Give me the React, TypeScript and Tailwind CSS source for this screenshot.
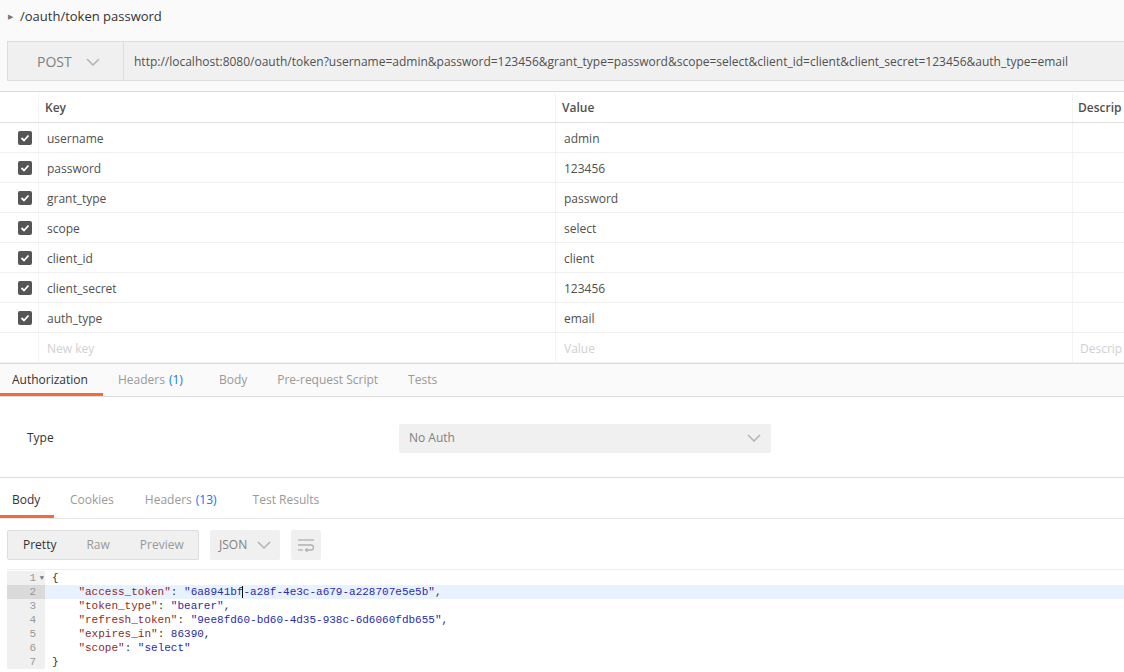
import React from 'react'

const params = [
  ['username', 'admin'],
  ['password', '123456'],
  ['grant_type', 'password'],
  ['scope', 'select'],
  ['client_id', 'client'],
  ['client_secret', '123456'],
  ['auth_type', 'email'],
]

function Chevron({ className }: { className?: string }) {
  return (
    <svg width="14" height="8" viewBox="0 0 14 8" className={className} fill="none">
      <path d="M1 1l6 6 6-6" stroke="#b5b5b5" strokeWidth="1.6" />
    </svg>
  )
}

function CheckBox() {
  return (
    <div className="size-[14px] rounded-[2px] bg-[#555] flex items-center justify-center">
      <svg width="10" height="8" viewBox="0 0 10 8" fill="none">
        <path d="M1.5 4l2.5 2.5L8.5 1.5" stroke="#fff" strokeWidth="1.8" />
      </svg>
    </div>
  )
}

function Row({ k, v, placeholder }: { k: string; v: string; placeholder?: boolean }) {
  const txt = placeholder ? 'text-[#d0d0d0]' : 'text-[#505050]'
  return (
    <div className="flex h-[30px] border-b border-[#f0f0f0]">
      <div className="w-[39px] flex items-center justify-end pr-[6px] border-r border-[#f3f3f3]">
        {!placeholder && <CheckBox />}
      </div>
      <div className={`w-[517px] flex items-center pl-[8px] pt-[2px] border-r border-[#f3f3f3] ${txt}`}>{k}</div>
      <div className={`w-[517px] flex items-center pl-[8px] pt-[2px] border-r border-[#f3f3f3] ${txt}`}>{v}</div>
      <div className="flex-1 flex items-center pl-[7px] pt-[2px] text-[#d0d0d0] overflow-hidden whitespace-nowrap">
        {placeholder ? 'Descrip' : ''}
      </div>
    </div>
  )
}

const K = ({ children }: { children: React.ReactNode }) => <span className="text-[#8a2b2b]">{children}</span>
const S = ({ children }: { children: React.ReactNode }) => <span className="text-[#2a2ab0]">{children}</span>

export default function App() {
  const lines: React.ReactNode[] = [
    <>{'{'}</>,
    <>    <K>"access_token"</K>: <S>"6a8941bf<span className="border-l border-black -ml-px" />-a28f-4e3c-a679-a228707e5e5b"</S>,</>,
    <>    <K>"token_type"</K>: <S>"bearer"</S>,</>,
    <>    <K>"refresh_token"</K>: <S>"9ee8fd60-bd60-4d35-938c-6d6060fdb655"</S>,</>,
    <>    <K>"expires_in"</K>: <span className="text-[#2a2a9a]">86390</span>,</>,
    <>    <K>"scope"</K>: <S>"select"</S></>,
    <>{'}'}</>,
  ]

  return (
    <div className="w-[1124px] h-[672px] overflow-hidden bg-white text-[12px] text-[#505050]" style={{ fontFamily: '"Open Sans", "Noto Sans", sans-serif' }}>
      {/* request header */}
      <div className="bg-[#fafafa] pl-[7px] pb-[10px]">
        <div className="h-[33px] flex items-center gap-[7px] pt-[1px]">
          <span className="text-[7px] text-[#777] ml-[1px]">▶</span>
          <span className="text-[13px] text-[#333]">/oauth/token password</span>
        </div>
        <div className="mt-[8px] h-[40px] flex bg-[#f0f0f0] border border-[#dddddd] border-r-0">
          <div className="w-[116px] flex items-center pl-[29px] gap-[14px] border-r border-[#dddddd] pt-[1px]">
            <span className="text-[14px] text-[#808080]">POST</span>
            <Chevron />
          </div>
          <div className="flex-1 flex items-center pl-[10px] pt-[1px] text-[#505050] whitespace-nowrap overflow-hidden">
            http://localhost:8080/oauth/token?username=admin&amp;password=123456&amp;grant_type=password&amp;scope=select&amp;client_id=client&amp;client_secret=123456&amp;auth_type=email
          </div>
        </div>
      </div>

      {/* params table */}
      <div className="border-t border-[#dcdcdc]">
        <div className="flex h-[31px] border-b border-[#e0e0e0] font-semibold text-[#505050] pt-[1px]">
          <div className="w-[39px] border-r border-[#f3f3f3]" />
          <div className="w-[517px] flex items-center pl-[6px] border-r border-[#f3f3f3]">Key</div>
          <div className="w-[517px] flex items-center pl-[6px] border-r border-[#f3f3f3]">Value</div>
          <div className="flex-1 flex items-center pl-[5px] whitespace-nowrap overflow-hidden">Descrip</div>
        </div>
        {params.map(([k, v]) => (
          <Row key={k} k={k} v={v} />
        ))}
        <Row k="New key" v="Value" placeholder />
      </div>

      {/* request tabs */}
      <div className="h-[34px] flex bg-[#fafafa] border-t border-[#dcdcdc] border-b border-b-[#dcdcdc]">
        <div className="w-[103px] flex items-center pl-[12px] text-[#333] border-b-[3px] border-[#f26b3a] pt-[3px]">Authorization</div>
        <div className="flex items-center pl-[15px] pr-[18px] text-[#999]">
          Headers <span className="text-[#097bed] ml-[4px]">(1)</span>
        </div>
        <div className="flex items-center pl-[18px] pr-[17px] text-[#999]">Body</div>
        <div className="flex items-center px-[13px] text-[#999]">Pre-request Script</div>
        <div className="flex items-center px-[17px] text-[#999]">Tests</div>
      </div>

      {/* auth body */}
      <div className="h-[80px] flex items-center pt-[2px]">
        <div className="w-[399px] pl-[27px] text-[#333]">Type</div>
        <div className="w-[372px] h-[29px] bg-[#f0f0f0] rounded-[2px] flex items-center justify-between pl-[10px] pr-[10px] text-[#808080]">
          <span>No Auth</span>
          <Chevron />
        </div>
      </div>

      {/* response tabs */}
      <div className="h-[42px] flex border-t border-[#dcdcdc] border-b border-b-[#e6e6e6]">
        <div className="w-[54px] flex items-center pl-[12px] text-[#333] border-b-[3px] border-[#f26b3a] pt-[6px]">Body</div>
        <div className="flex items-center pl-[16px] pr-[16px] text-[#999] pt-[3px]">Cookies</div>
        <div className="flex items-center px-[15px] text-[#999] pt-[3px]">
          Headers <span className="text-[#097bed] ml-[4px]">(13)</span>
        </div>
        <div className="flex items-center pl-[21px] pr-[20px] text-[#999] pt-[3px]">Test Results</div>
      </div>

      {/* toolbar */}
      <div className="h-[50px] flex items-center pl-[7px] gap-[11px] pt-[1px]">
        <div className="w-[192px] h-[30px] flex items-center bg-[#f0f0f0] border border-[#dddddd] rounded-[2px] text-[#999]">
          <span className="pl-[15px] text-[#333]">Pretty</span>
          <span className="pl-[30px]">Raw</span>
          <span className="pl-[30px]">Preview</span>
        </div>
        <div className="w-[70px] h-[30px] flex items-center justify-between px-[9px] bg-[#f0f0f0] rounded-[2px] text-[#808080]">
          <span>JSON</span>
          <Chevron />
        </div>
        <div className="w-[30px] h-[30px] flex items-center justify-center bg-[#f0f0f0] rounded-[2px]">
          <svg width="18" height="14" viewBox="0 0 18 14" fill="none" stroke="#b0b0b0" strokeWidth="1.3">
            <path d="M1 2h16" />
            <path d="M1 7h13a2.5 2.5 0 010 5h-5" />
            <path d="M10.5 10.2L8.5 12l2 1.8" />
            <path d="M1 12h5" />
          </svg>
        </div>
      </div>

      {/* editor */}
      <div className="ml-[7px] border-t border-[#eeeeee] pt-[1px] text-[11px] leading-[14px]" style={{ fontFamily: '"Liberation Mono", "DejaVu Sans Mono", monospace' }}>
        {lines.map((ln, i) => (
          <div key={i} className={`flex h-[14px] ${i === 1 ? 'bg-[#e8f2ff]' : ''}`}>
            <div className={`w-[38px] flex items-center justify-end pr-[9px] text-[#999] whitespace-pre relative ${i === 1 ? 'bg-[#dadada]' : 'bg-[#f0f0f0]'}`}>
              {i + 1}
              {i === 0 && <span className="absolute right-[1px] text-[7px] text-[#777]">▼</span>}
            </div>
            <div className="pl-[7px] whitespace-pre text-[#333]">{ln}</div>
          </div>
        ))}
      </div>
    </div>
  )
}
